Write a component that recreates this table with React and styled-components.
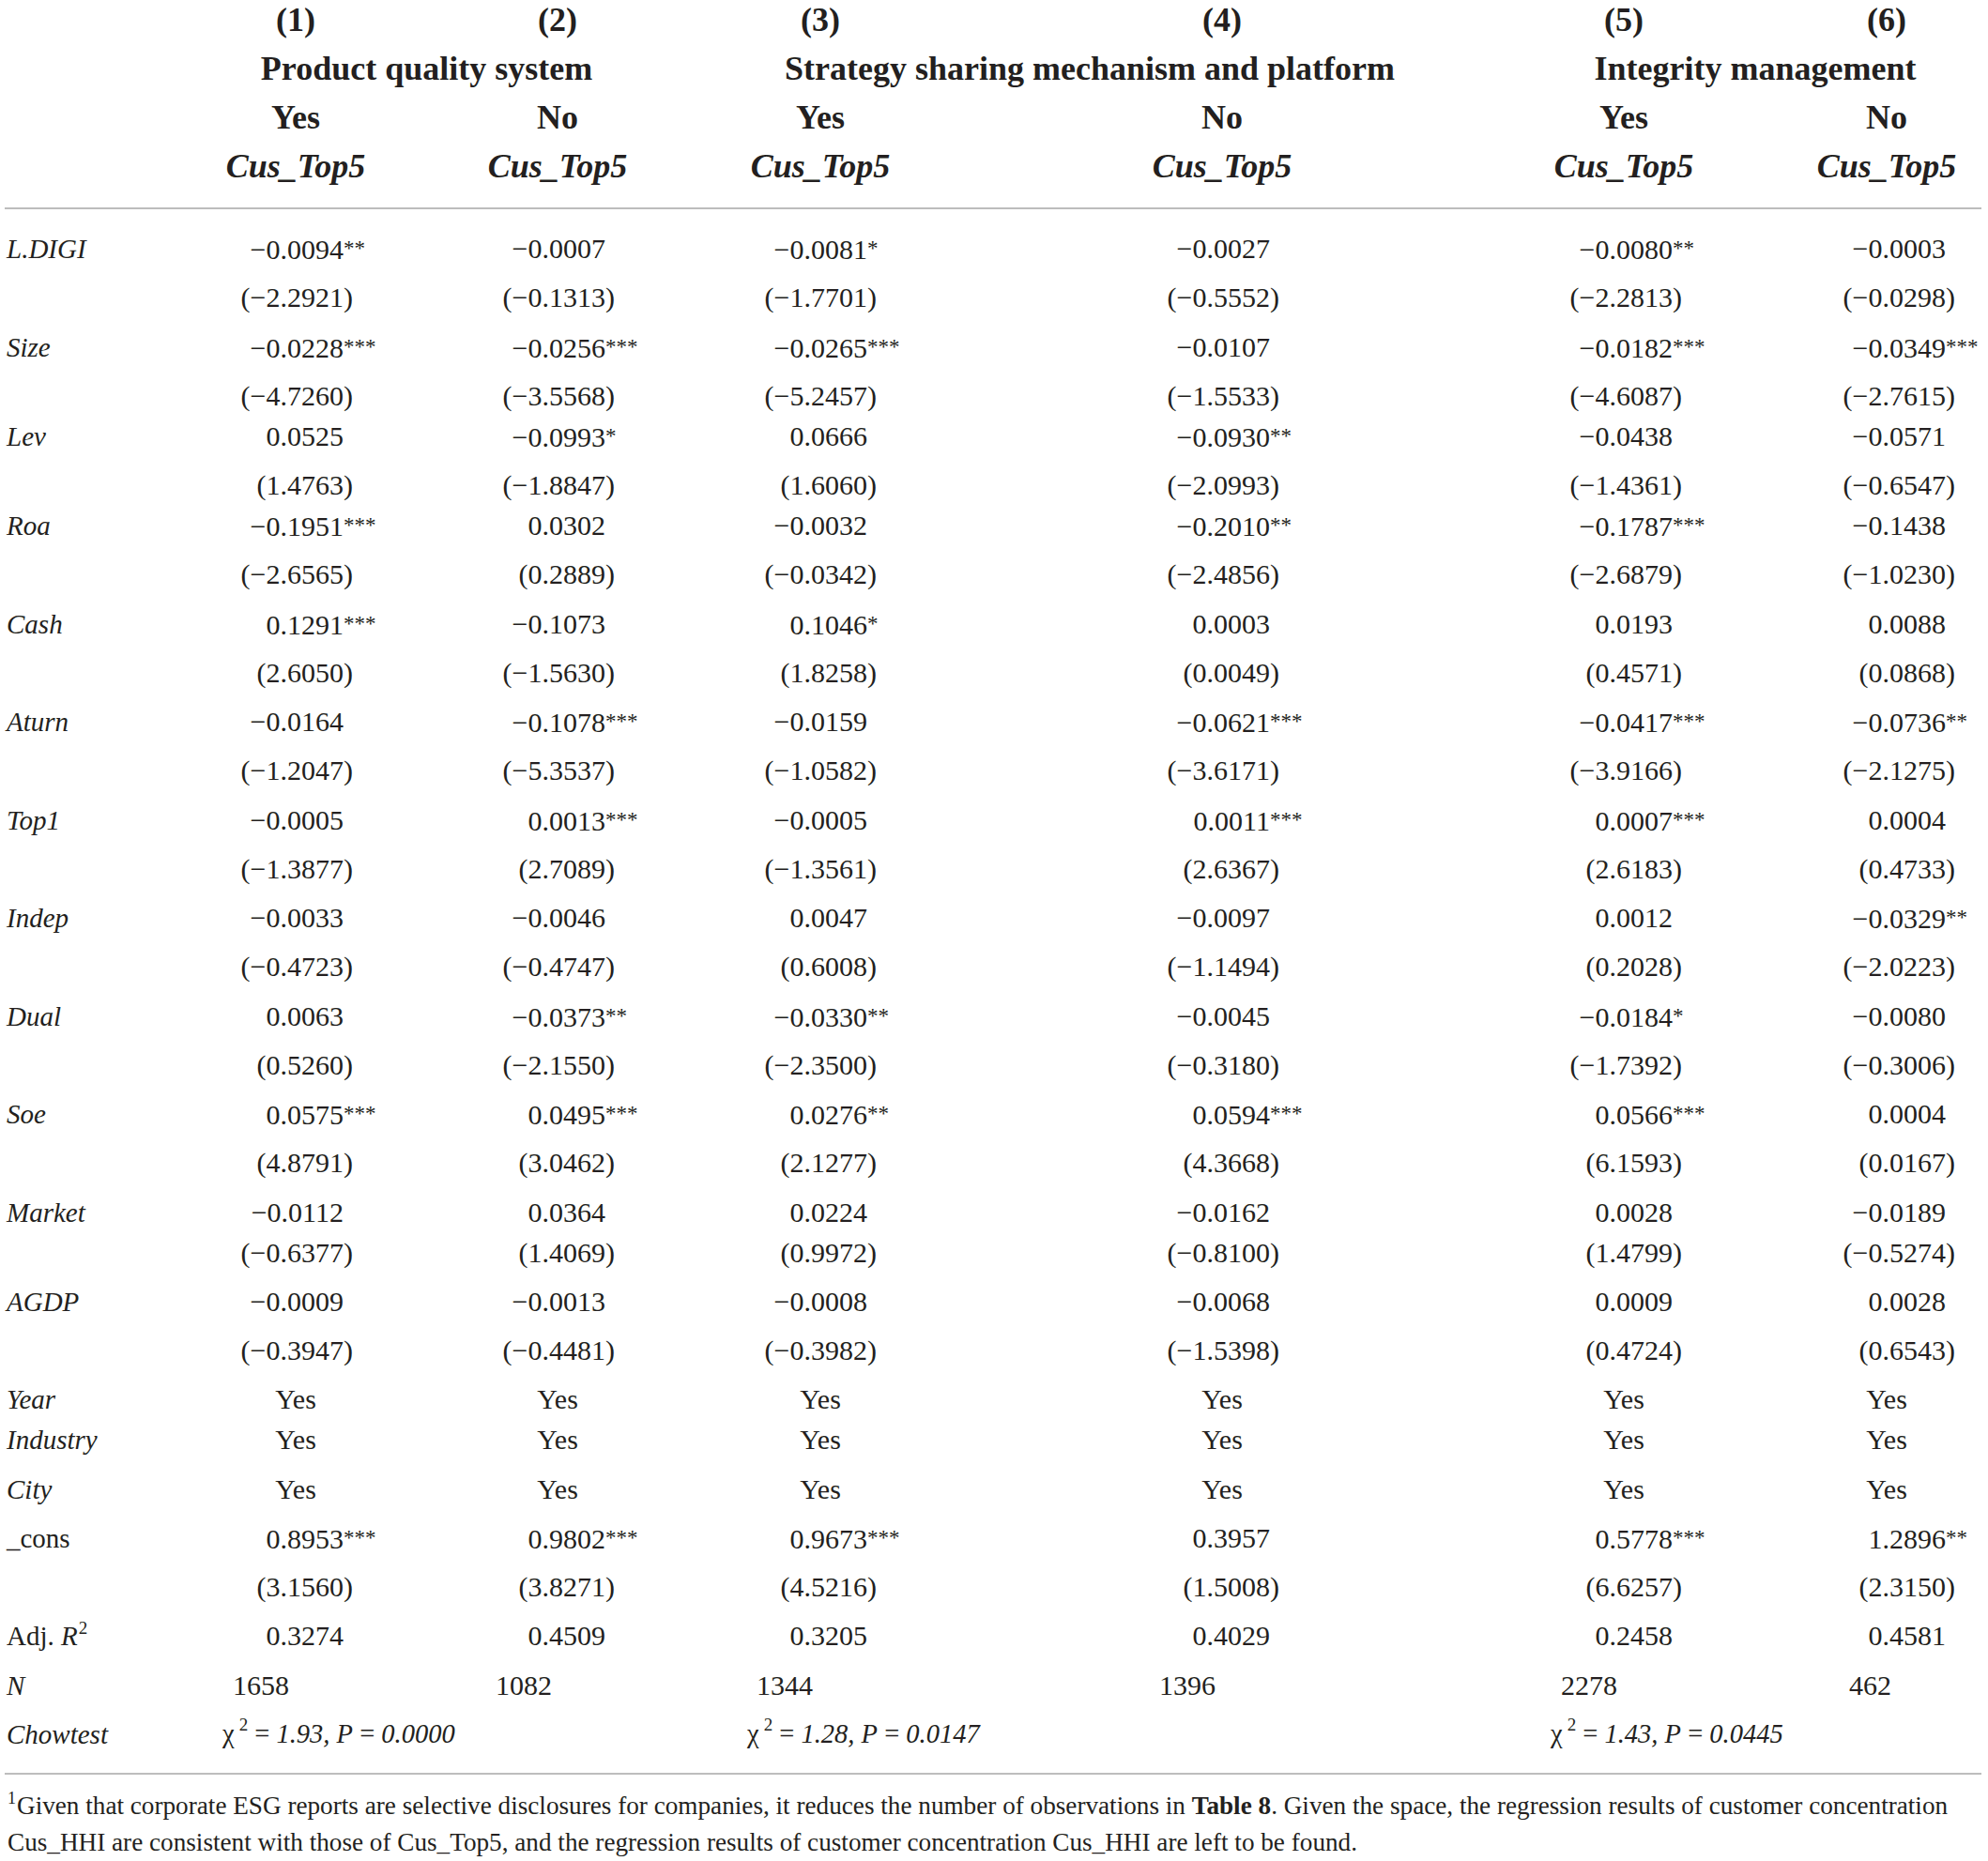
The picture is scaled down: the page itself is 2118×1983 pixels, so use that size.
import React from "react";
import styled, { createGlobalStyle } from "styled-components";

const GlobalStyle = createGlobalStyle`
  html, body {
    margin: 0;
    padding: 0;
    background: #ffffff;
  }
  body {
    font-family: "Liberation Serif", "Times New Roman", serif;
    color: #231f20;
    overflow: hidden;
  }
`;

// label | col1 | gap | col2 | gap | col3 | gap | col4 | gap | col5 | gap | col6
const COLS =
  "235px 160px 119px 160px 120px 160px 268px 160px 268px 160px 120px 160px";

const NUM_PAD = [29, 29, 30, 29, 28, 17];
const N_PAD = [13, 14, 12, 13, 13, 40];

const header = {
  nums: ["(1)", "(2)", "(3)", "(4)", "(5)", "(6)"],
  groups: [
    { col: 1, text: "Product quality system" },
    { col: 3, text: "Strategy sharing mechanism and platform", shift: 146 },
    { col: 5, text: "Integrity management" },
  ],
  yesNo: ["Yes", "No", "Yes", "No", "Yes", "No"],
};

const coefRows = [
  ["L.DIGI", ["−0.0094**", "−0.0007", "−0.0081*", "−0.0027", "−0.0080**", "−0.0003"], ["(−2.2921)", "(−0.1313)", "(−1.7701)", "(−0.5552)", "(−2.2813)", "(−0.0298)"]],
  ["Size", ["−0.0228***", "−0.0256***", "−0.0265***", "−0.0107", "−0.0182***", "−0.0349***"], ["(−4.7260)", "(−3.5568)", "(−5.2457)", "(−1.5533)", "(−4.6087)", "(−2.7615)"], 52.25, 43],
  ["Lev", ["0.0525", "−0.0993*", "0.0666", "−0.0930**", "−0.0438", "−0.0571"], ["(1.4763)", "(−1.8847)", "(1.6060)", "(−2.0993)", "(−1.4361)", "(−0.6547)"], 52.25, 43],
  ["Roa", ["−0.1951***", "0.0302", "−0.0032", "−0.2010**", "−0.1787***", "−0.1438"], ["(−2.6565)", "(0.2889)", "(−0.0342)", "(−2.4856)", "(−2.6879)", "(−1.0230)"]],
  ["Cash", ["0.1291***", "−0.1073", "0.1046*", "0.0003", "0.0193", "0.0088"], ["(2.6050)", "(−1.5630)", "(1.8258)", "(0.0049)", "(0.4571)", "(0.0868)"]],
  ["Aturn", ["−0.0164", "−0.1078***", "−0.0159", "−0.0621***", "−0.0417***", "−0.0736**"], ["(−1.2047)", "(−5.3537)", "(−1.0582)", "(−3.6171)", "(−3.9166)", "(−2.1275)"]],
  ["Top1", ["−0.0005", "0.0013***", "−0.0005", "0.0011***", "0.0007***", "0.0004"], ["(−1.3877)", "(2.7089)", "(−1.3561)", "(2.6367)", "(2.6183)", "(0.4733)"]],
  ["Indep", ["−0.0033", "−0.0046", "0.0047", "−0.0097", "0.0012", "−0.0329**"], ["(−0.4723)", "(−0.4747)", "(0.6008)", "(−1.1494)", "(0.2028)", "(−2.0223)"]],
  ["Dual", ["0.0063", "−0.0373**", "−0.0330**", "−0.0045", "−0.0184*", "−0.0080"], ["(0.5260)", "(−2.1550)", "(−2.3500)", "(−0.3180)", "(−1.7392)", "(−0.3006)"]],
  ["Soe", ["0.0575***", "0.0495***", "0.0276**", "0.0594***", "0.0566***", "0.0004"], ["(4.8791)", "(3.0462)", "(2.1277)", "(4.3668)", "(6.1593)", "(0.0167)"]],
  ["Market", ["−0.0112", "0.0364", "0.0224", "−0.0162", "0.0028", "−0.0189"], ["(−0.6377)", "(1.4069)", "(0.9972)", "(−0.8100)", "(1.4799)", "(−0.5274)"], 43, 52.25],
  ["AGDP", ["−0.0009", "−0.0013", "−0.0008", "−0.0068", "0.0009", "0.0028"], ["(−0.3947)", "(−0.4481)", "(−0.3982)", "(−1.5398)", "(0.4724)", "(0.6543)"]],
];

const fixedRows = [
  ["Year", 43],
  ["Industry", 52.25],
  ["City", 52.25],
];

const consRow = [
  ["0.8953***", "0.9802***", "0.9673***", "0.3957", "0.5778***", "1.2896**"],
  ["(3.1560)", "(3.8271)", "(4.5216)", "(1.5008)", "(6.6257)", "(2.3150)"],
];
const adjR2 = ["0.3274", "0.4509", "0.3205", "0.4029", "0.2458", "0.4581"];
const nObs = ["1658", "1082", "1344", "1396", "2278", "462"];
const chow = [
  { col: 1, chi: "1.93", p: "0.0000" },
  { col: 3, chi: "1.28", p: "0.0147" },
  { col: 5, chi: "1.43", p: "0.0445" },
];

function splitValue(s) {
  const stars = (s.match(/\*+$/) || [""])[0];
  let core = stars ? s.slice(0, -stars.length) : s;
  let paren = "";
  if (core.endsWith(")")) {
    paren = ")";
    core = core.slice(0, -1);
  }
  return { core, paren, stars };
}

const Value = ({ text }) => {
  const { core, paren, stars } = splitValue(text);
  return (
    <span>
      {core}
      <Tail>
        {paren}
        {stars && <Stars>{stars}</Stars>}
      </Tail>
    </span>
  );
};

const NumberRow = ({ label, values, height, upright }) => (
  <Row $h={height}>
    {label !== null && <Label $upright={upright}>{label}</Label>}
    {values.map((v, i) => (
      <Cell key={i} $col={i + 1} $align="right" $pr={NUM_PAD[i]}>
        <Value text={v} />
      </Cell>
    ))}
  </Row>
);

export default function App() {
  return (
    <Page>
      <GlobalStyle />
      <HeadRow>
        {header.nums.map((n, i) => (
          <HeadCell key={n} $col={i + 1}>
            {n}
          </HeadCell>
        ))}
      </HeadRow>
      <HeadRow>
        {header.groups.map((g) => (
          <HeadCell key={g.text} $col={g.col} $span={2} $shift={g.shift}>
            {g.text}
          </HeadCell>
        ))}
      </HeadRow>
      <HeadRow>
        {header.yesNo.map((t, i) => (
          <HeadCell key={i} $col={i + 1}>
            {t}
          </HeadCell>
        ))}
      </HeadRow>
      <HeadRow>
        {header.yesNo.map((_, i) => (
          <HeadCell key={i} $col={i + 1} $italic>
            Cus_Top5
          </HeadCell>
        ))}
      </HeadRow>
      <Rule $top={13} />

      <Body>
        {coefRows.map(([label, coef, t, h1 = 52.25, h2 = 52.25]) => (
          <React.Fragment key={label}>
            <NumberRow label={label} values={coef} height={h1} />
            <NumberRow label={null} values={t} height={h2} />
          </React.Fragment>
        ))}

        {fixedRows.map(([label, h]) => (
          <Row key={label} $h={h}>
            <Label>{label}</Label>
            {nObs.map((_, i) => (
              <Cell key={i} $col={i + 1} $align="center">
                Yes
              </Cell>
            ))}
          </Row>
        ))}

        <NumberRow label="_cons" upright values={consRow[0]} height={52.25} />
        <NumberRow label={null} values={consRow[1]} height={52.25} />

        <Row $h={52.25}>
          <Label $upright>
            Adj. <i>R</i>
            <Sup>2</Sup>
          </Label>
          {adjR2.map((v, i) => (
            <Cell key={i} $col={i + 1} $align="right" $pr={NUM_PAD[i]}>
              {v}
            </Cell>
          ))}
        </Row>

        <Row $h={52.25}>
          <Label>N</Label>
          {nObs.map((v, i) => (
            <Cell key={i} $col={i + 1} $align="left" $pl={N_PAD[i]}>
              {v}
            </Cell>
          ))}
        </Row>

        <Row $h={52.25}>
          <Label>Chowtest</Label>
          {chow.map((c) => (
            <Cell key={c.col} $col={c.col} $align="left" $pl={2} $size={28.5}>
              <span>
                χ<ChiSup>2</ChiSup> = <i>{c.chi}, P</i> = <i>{c.p}</i>
              </span>
            </Cell>
          ))}
        </Row>
      </Body>

      <Rule $top={6} />

      <Footnote>
        <FootSup>1</FootSup>Given that corporate ESG reports are selective
        disclosures for companies, it reduces the number of observations in{" "}
        <b>Table 8</b>. Given the space, the regression results of customer
        concentration
        <br />
        Cus_HHI are consistent with those of Cus_Top5, and the regression
        results of customer concentration Cus_HHI are left to be found.
      </Footnote>
    </Page>
  );
}

const Page = styled.div`
  width: 2118px;
  min-height: 1983px;
  background: #ffffff;
`;

const HeadRow = styled.div`
  display: grid;
  grid-template-columns: ${COLS};
  height: 52px;
  line-height: 42px;
  font-size: 36px;
  font-weight: 700;
  white-space: nowrap;
`;

const HeadCell = styled.div`
  grid-column: ${(p) => `${p.$col * 2} / ${(p.$col + (p.$span || 1) - 1) * 2 + 1}`};
  display: flex;
  justify-content: center;
  padding-left: ${(p) => p.$shift || 0}px;
  font-style: ${(p) => (p.$italic ? "italic" : "normal")};
`;

const Rule = styled.div`
  width: 2106px;
  height: 2px;
  margin: ${(p) => p.$top}px 0 0 5px;
  background: #bdbdbd;
`;

const Body = styled.div`
  padding-top: 25px;
`;

const Row = styled.div`
  display: grid;
  grid-template-columns: ${COLS};
  height: ${(p) => p.$h}px;
  line-height: 34px;
  font-size: 30px;
  white-space: nowrap;
`;

const Label = styled.div`
  grid-column: 1;
  padding-left: 7px;
  font-size: 29px;
  font-style: ${(p) => (p.$upright ? "normal" : "italic")};
`;

const Cell = styled.div`
  grid-column: ${(p) => p.$col * 2};
  display: flex;
  justify-content: ${(p) =>
    p.$align === "center" ? "center" : p.$align === "left" ? "flex-start" : "flex-end"};
  padding-left: ${(p) => p.$pl || 0}px;
  padding-right: ${(p) => p.$pr || 0}px;
  font-size: ${(p) => p.$size || 30}px;
`;

const Tail = styled.span`
  display: inline-block;
  width: 0;
  white-space: nowrap;
`;

const Stars = styled.span`
  font-size: 23px;
  vertical-align: 4px;
`;

const Sup = styled.sup`
  font-size: 19px;
  line-height: 0;
  vertical-align: 12px;
  margin-left: 1px;
`;

const ChiSup = styled.sup`
  font-size: 19px;
  line-height: 0;
  vertical-align: 13px;
  margin-left: 5px;
`;

const Footnote = styled.p`
  margin: 14px 0 0;
  padding-left: 8px;
  font-size: 27.2px;
  line-height: 39px;
  white-space: nowrap;

  b {
    font-weight: 700;
  }
`;

const FootSup = styled.sup`
  font-size: 18px;
  line-height: 0;
  vertical-align: 11px;
  margin-right: 1px;
`;
